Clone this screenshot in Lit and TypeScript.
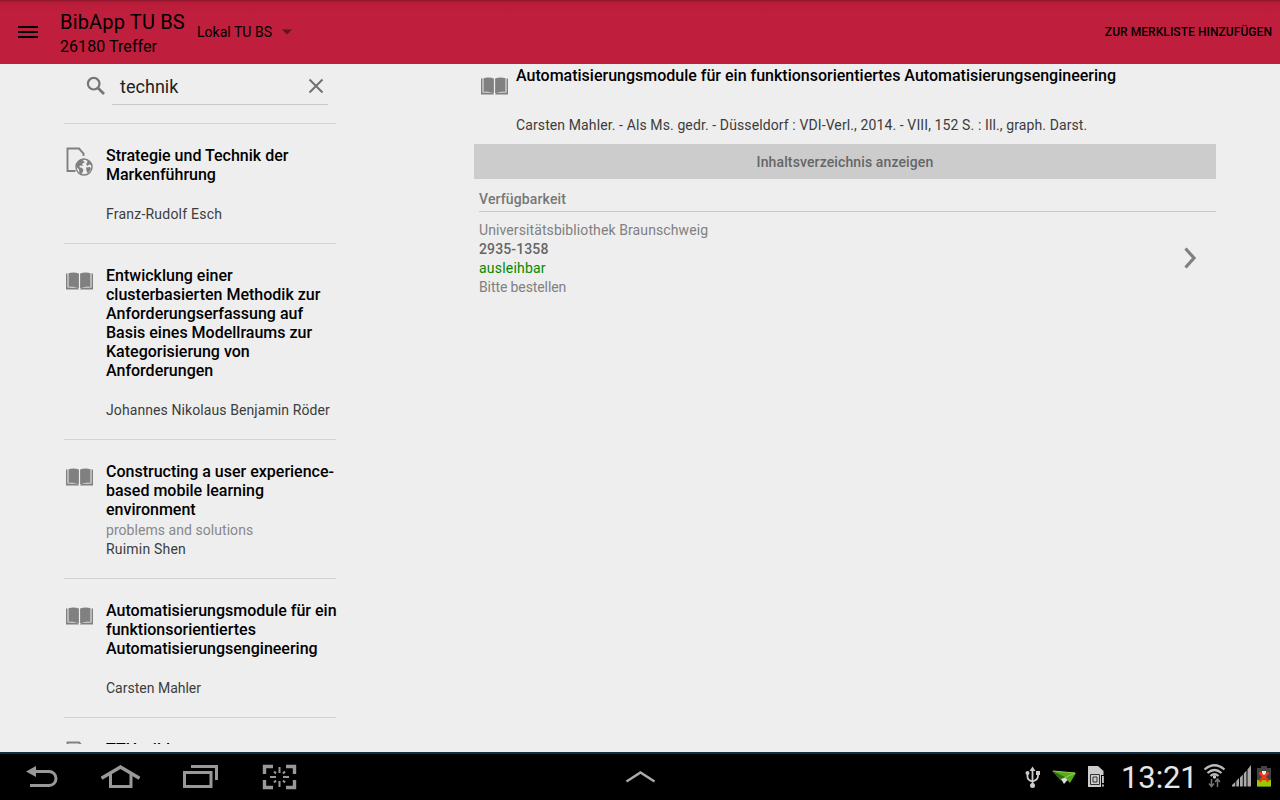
import { LitElement, html, css } from "lit";
import { customElement } from "lit/decorators.js";

interface Hit { kind: "book" | "web"; lines: string[]; sub?: string; author: string; tracking?: number }

const hits: Hit[] = [
  { kind: "web", lines: ["Strategie und Technik der", "Markenführung"], author: "Franz-Rudolf Esch", tracking: 0.22 },
  { kind: "book", lines: ["Entwicklung einer", "clusterbasierten Methodik zur", "Anforderungserfassung auf", "Basis eines Modellraums zur", "Kategorisierung von", "Anforderungen"], author: "Johannes Nikolaus Benjamin Röder", tracking: 0.09 },
  { kind: "book", lines: ["Constructing a user experience-", "based mobile learning", "environment"], sub: "problems and solutions", author: "Ruimin Shen", tracking: 0.2 },
  { kind: "book", lines: ["Automatisierungsmodule für ein", "funktionsorientiertes", "Automatisierungsengineering"], author: "Carsten Mahler", tracking: 0 },
  { kind: "web", lines: ["TTH wilde"], author: "" },
];

const book = html`<svg class="book" width="28" height="18" viewBox="0.5 0 28 18">
  <path fill="#808080" d="M0.5 1.5H2V15.6L12 15.8L13.5 17.5H0.5ZM27.5 1.5H26V15.6L16 15.8L14.5 17.5H27.5Z"/>
  <path fill="#808080" d="M3 1.3C6 .2 10 .2 13.4 1.6V16.6C10 15 6 14.6 3 15ZM25 1.3C22 .2 18 .2 14.6 1.6V16.6C18 15 22 14.6 25 15Z"/>
</svg>`;

const web = html`<svg class="web" width="28" height="30" viewBox="0 0 28 30">
  <path fill="none" stroke="#808080" stroke-width="1.9" d="M9.5 24H1.5V1.5H13L17.500 6.500V9"/>
  <circle cx="18" cy="20" r="8" fill="none" stroke="#808080" stroke-width="1.4"/>
  <path fill="#808080" d="M11 16L14 12.5L18 11.6L17 14L19 15L16 17L17 19L14.500 18.500L13 20L16 21L17.500 23L15.500 27.500L13.500 26L13 22.500L10.500 20ZM20 12.500L24 14.500L25.500 18L23 17.500L21.500 19L20 17L21.500 15ZM20 20.500L24 20L25 22L22 26.500L20.500 24Z"/>
</svg>`;

@customElement("app-root")
export class AppRoot extends LitElement {
  static styles = css`
    :host { display: flex; flex-direction: column; width: 1280px; height: 800px; overflow: hidden; background: #eee; font-family: Roboto, "Liberation Sans", sans-serif; font-size: 14px; line-height: 19px; color: #3c3c3c; white-space: nowrap; }
    svg { display: block; flex: none; }
    .bar { height: 64px; flex: none; box-sizing: border-box; background: linear-gradient(#85162a 0, #9f1931 1px, #b41c38 2px, #bb1d3a 6px, #bf1e3c 12px); color: #000; display: flex; align-items: center; padding: 0 8px 0 18px; }
    .name { margin-left: 22px; width: 137px; }
    .app { font-size: 20px; line-height: 25px; letter-spacing: .17px; padding-top: 4px; }
    .count { font-size: 16px; line-height: 24px; letter-spacing: .06px; }
    .scope { display: flex; align-items: center; gap: 10px; flex: 1; letter-spacing: .02px; }
    .add { font-size: 12px; font-weight: 500; letter-spacing: .06px; }
    .body { flex: none; height: 680px; display: flex; overflow: hidden; }
    .list { width: 272px; margin-left: 64px; flex: none; }
    .search { height: 59px; border-bottom: 1px solid #d2d2d2; display: flex; padding: 0 8px 0 22px; }
    .glass { margin-top: 12px; }
    .field { flex: 1; margin-left: 6px; height: 40px; border-bottom: 1px solid #c8c8c8; display: flex; align-items: center; justify-content: space-between; padding: 0 4px 0 8px; font-size: 18px; color: #222; letter-spacing: .03px; }
    .query { padding-top: 4px; }
    .clear { margin-top: 4px; }
    .hit { display: flex; padding: 22px 0 19px; border-bottom: 1px solid #d2d2d2; }
    .icon { width: 42px; flex: none; }
    .book { margin: 6px 0 0 2px; }
    .web { margin: 1px 0 0 2px; }
    .title { font-size: 16px; font-weight: 500; color: #000; }
    .line { height: 19px; }
    .sub { height: 21px; line-height: 23px; color: #888; letter-spacing: .05px; }
    .author { height: 19px; }
    .detail { margin-left: 138px; width: 742px; }
    .head { display: flex; height: 80px; }
    .head .book { margin: 13px 0 0 7px; }
    .head .text { padding: 2px 0 0 7px; }
    .meta { margin-top: 31px; letter-spacing: .11px; }
    .button { height: 35px; background: #ccc; color: #666; font-weight: 500; letter-spacing: .12px; text-align: center; line-height: 36px; }
    .section { margin-left: 5px; height: 32px; border-bottom: 1px solid #c8c8c8; color: #777; font-weight: 500; letter-spacing: .14px; line-height: 40px; }
    .copy { margin-left: 5px; padding: 9px 19px 0 0; display: flex; justify-content: space-between; color: #808080; }
    .go { margin-top: 25px; }
    .place { letter-spacing: .1px; }
    .shelf { font-weight: 500; color: #666; letter-spacing: .12px; }
    .free { color: #008a00; letter-spacing: .2px; }
    .order { letter-spacing: -.1px; }
    .nav { margin-top: 8px; box-sizing: border-box; height: 48px; border-top: 2px solid #0b3044; background: #000; display: flex; }
    .clock { width: 80px; color: #e6e6e6; font-size: 31px; line-height: 47px; font-weight: 400; letter-spacing: -.1px; }
  `;

  render() {
    return html`
      <header class="bar">
        <svg width="20" height="14" viewBox="0 0 20 14"><path d="M0 1h20v2H0zM0 6h20v2H0zM0 11h20v2H0z"/></svg>
        <div class="name"><div class="app">BibApp TU BS</div><div class="count">26180 Treffer</div></div>
        <div class="scope"><span>Lokal TU BS</span><svg width="10" height="6"><path fill="#5e1524" d="M0 .5h10L5 5.500z"/></svg></div>
        <span class="add">ZUR MERKLISTE HINZUFÜGEN</span>
      </header>
      <main class="body">
        <section class="list">
          <div class="search">
            <svg class="glass" width="20" height="20" viewBox="0 0 20 20" fill="none" stroke="#757575"><circle cx="7.700" cy="7.700" r="5.800" stroke-width="2.200"/><path stroke-width="2.700" d="M12 12L18 18"/></svg>
            <div class="field"><span class="query">technik</span><svg class="clear" width="16" height="16"><path fill="none" stroke="#707070" stroke-width="2" d="M1.500 1.500l13 13M14.500 1.500l-13 13"/></svg></div>
          </div>
          ${hits.map((h) => html`<article class="hit">
            <div class="icon">${h.kind === "book" ? book : web}</div>
            <div>
              <div class="title">${h.lines.map((l) => html`<div class="line">${l}</div>`)}</div>
              <div class="sub">${h.sub ?? ""}</div>
              <div class="author" style="letter-spacing:${h.tracking ?? 0}px">${h.author}</div>
            </div>
          </article>`)}
        </section>
        <section class="detail">
          <div class="head">${book}
            <div class="text">
              <div class="title">Automatisierungsmodule für ein funktionsorientiertes Automatisierungsengineering</div>
              <div class="meta">Carsten Mahler. - Als Ms. gedr. - Düsseldorf : VDI-Verl., 2014. - VIII, 152 S. : Ill., graph. Darst.</div>
            </div>
          </div>
          <div class="button">Inhaltsverzeichnis anzeigen</div>
          <div class="section">Verfügbarkeit</div>
          <div class="copy">
            <div>
              <div class="place">Universitätsbibliothek Braunschweig</div>
              <div class="shelf">2935-1358</div>
              <div class="free">ausleihbar</div>
              <div class="order">Bitte bestellen</div>
            </div>
            <svg class="go" width="14" height="24"><path fill="none" stroke="#808080" stroke-width="3.200" d="M2.500 2.500L11 12L2.500 21.500"/></svg>
          </div>
        </section>
      </main>
      <footer class="nav">
        <svg width="1020" height="46" viewBox="0 754 1020 46">
          <g fill="none" stroke="#999" stroke-width="3">
            <path d="M33 771.500H49a7 7 0 0 1 0 14H30"/><path fill="#999" stroke="none" d="M26 771.500L36 766V777z"/>
            <path stroke-width="3.400" d="M101.500 778.300L120.500 767L139.500 778.300"/><path d="M110.500 774V786.500H131V774"/>
            <path d="M184.500 772.500H211V786.500H184.500zM191 766.500H216.500V780"/>
            <path d="M264.500 774V766.500H273M286 766.500H294.500V774M294.500 780V787.500H286M273 787.500H264.500V780" stroke-width="3.400"/>
          </g>
          <path stroke="#999" stroke-width="2" d="M279.500 767v6M279.500 781v6M270 777h6M283 777h6M274 771.500l2 2M285 771.500l-2 2M274 782.500l2-2M285 782.500l-2-2"/>
          <path fill="none" stroke="#aaa" stroke-width="2.500" d="M626.500 781.500L640.500 772.500L654.500 781.500"/>
        </svg>
        <svg width="101" height="46" viewBox="1020 754 101 46">
          <g fill="none" stroke="#ccc" stroke-width="1.800"><path d="M1032.500 770V785M1027.500 774V777Q1027.500 780 1032.500 781.500Q1038 780 1038 776V773"/></g>
          <path fill="#ccc" d="M1032.500 766.500L1035.500 771H1029.500zM1036 771h4v4h-4z"/><circle cx="1027.500" cy="773" r="2" fill="#ccc"/><circle cx="1032.500" cy="785.500" r="2.500" fill="#ccc"/>
          <path fill="#5aa81e" d="M1052 771L1076 773L1070 783L1065 778z"/><path fill="#2f6b10" d="M1052 771L1065 777L1061 781z"/><path fill="#ddd" d="M1061 779L1065 777.500L1067.500 780L1064 784z"/><path fill="none" stroke="#8ed34c" d="M1053 771L1075 773L1065 777.500"/>
          <path fill="#ccc" d="M1088 766H1098L1103.500 771V787H1088z"/>
          <path fill="none" stroke="#333" d="M1090.500 774.500H1099.500V784.500H1090.500zM1093 777H1097V782H1093z"/>
          <path fill="#000" d="M1101 775h3v12h-3z"/><path fill="#ccc" d="M1102 776h1.800v7h-1.800zM1102 784.500h1.800v2h-1.800z"/>
        </svg>
        <div class="clock">13:21</div>
        <svg width="79" height="46" viewBox="1201 754 79 46">
          <g fill="none" stroke="#bbb" stroke-width="2.200"><path d="M1204.500 769.500Q1214.500 761 1224.500 769.500"/><path d="M1207.500 773Q1214.500 767 1221.500 773"/><path d="M1210.500 776Q1214.500 772.500 1218.500 776"/></g>
          <circle cx="1214.500" cy="777" r="1.700" fill="#ccc"/>
          <path fill="none" stroke="#777" stroke-width="1.500" d="M1211.500 779V786M1209 783.500L1211.500 786.500L1214 783.500M1217.500 787V779.500M1215 782L1217.500 779L1220 782"/>
          <path fill="#aaa" d="M1232 786.500V785L1235.300 782V786.500zM1236.300 786.500V781L1239 778V786.500zM1240 786.500V777.500L1242.800 774.500V786.500zM1243.800 786.500V773.500L1246.500 770.500V786.500zM1247.500 786.500V769.500L1251 765V786.500z"/>
          <path fill="#444" d="M1261 766h6v2h4v18.500H1257V768h4z"/><path fill="#99cc00" d="M1257 780h14v6.500h-14z"/><path fill="#eee" d="M1262 771h4v4h-4z"/>
          <path stroke="#f03a17" stroke-width="2.500" d="M1259.500 772.500L1268.500 781.500M1268.500 772.500L1259.500 781.500"/>
        </svg>
      </footer>`;
  }
}
